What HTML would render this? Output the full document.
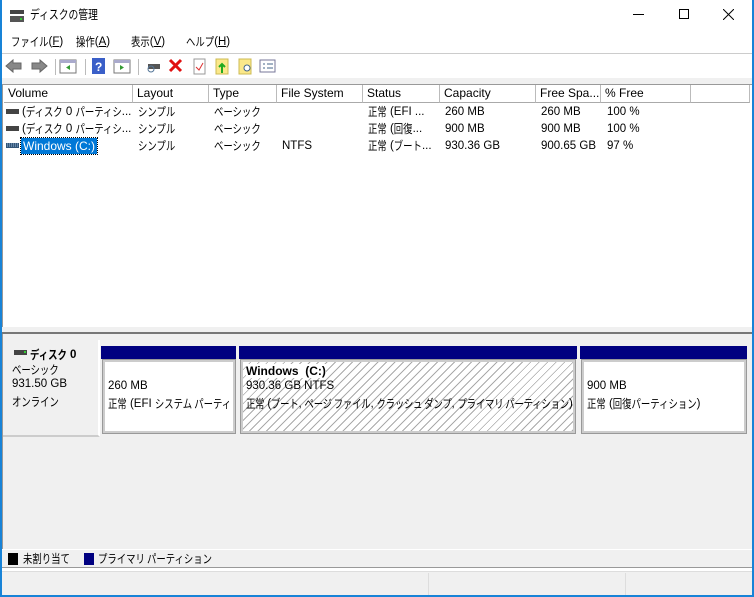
<!DOCTYPE html>
<html><head><meta charset="utf-8"><style>
*{margin:0;padding:0;box-sizing:border-box}
body{width:754px;height:597px;position:relative;overflow:hidden;background:#fff;font-family:"Liberation Sans","Noto Sans CJK JP",sans-serif;font-size:11.5px;color:#000}
.a{position:absolute;white-space:nowrap}
.k{display:inline-block;font-size:9.4px;transform:scaleY(1.27);font-family:"Noto Sans CJK JP",sans-serif;line-height:12px}
.hd{position:absolute;top:85px;height:18px;background:#fff;border-right:1px solid #bbb;border-bottom:1px solid #aaa;padding-left:4px;line-height:17px;font-size:12px}
.r{position:absolute;line-height:14px;white-space:nowrap;overflow:hidden}
.bar{position:absolute;top:346px;height:13px;background:#000080}
.box{position:absolute;top:360px;height:73px;background:#fff;border:2px solid #ccc;outline:1px solid #999}
</style></head><body>
<div class="a" style="left:0;top:0;width:2px;height:597px;background:#1883d7"></div>
<div class="a" style="right:0;top:0;width:2px;height:597px;background:#1883d7"></div>
<div class="a" style="left:0;bottom:0;width:754px;height:2px;background:#1883d7"></div>
<svg class="a" style="left:9px;top:9px" width="16" height="14"><rect x="1" y="1" width="14" height="4" fill="#444"/><rect x="1" y="7" width="14" height="6" fill="#555"/><rect x="11" y="9" width="2" height="2" fill="#3c3"/></svg>
<div class="a" style="left:30px;top:8px"><span class="k" style="font-size:9.8px">ディスクの管理</span></div>
<div class="a" style="left:633px;top:14px;width:11px;height:1px;background:#000"></div>
<div class="a" style="left:679px;top:9px;width:10px;height:10px;border:1px solid #000"></div>
<svg class="a" style="left:723px;top:9px" width="11" height="11"><path d="M0 0L11 11M11 0L0 11" stroke="#000"/></svg>
<div class="a" style="left:11px;top:35px"><span class="k">ファイル</span>(<u>F</u>)</div>
<div class="a" style="left:76px;top:35px"><span class="k">操作</span>(<u>A</u>)</div>
<div class="a" style="left:131px;top:35px"><span class="k">表示</span>(<u>V</u>)</div>
<div class="a" style="left:186px;top:35px"><span class="k">ヘルプ</span>(<u>H</u>)</div>
<div class="a" style="left:2px;top:53px;width:750px;height:1px;background:#ccc"></div>
<svg class="a" style="left:4px;top:57px" width="290" height="20">
<path d="M2 9L9 3V6H17V12H9V15Z" fill="#888" stroke="#666"/>
<path d="M43 9L36 3V6H28V12H36V15Z" fill="#888" stroke="#666"/>
<rect x="51" y="2" width="1" height="16" fill="#bbb"/>
<rect x="56" y="3" width="16" height="13" fill="#fff" stroke="#777"/><rect x="56" y="3" width="16" height="3" fill="#aac"/><path d="M66 8L62 10.5L66 13Z" fill="#393"/>
<rect x="81" y="2" width="1" height="16" fill="#bbb"/>
<rect x="88" y="1" width="13" height="16" fill="#3a5fc8"/><text x="91" y="14" fill="#fff" font-size="12" font-weight="bold" font-family="Liberation Sans">?</text>
<rect x="110" y="3" width="16" height="13" fill="#fff" stroke="#777"/><rect x="110" y="3" width="16" height="3" fill="#aac"/><path d="M116 8L120 10.5L116 13Z" fill="#393"/>
<rect x="134" y="2" width="1" height="16" fill="#bbb"/>
<rect x="144" y="7" width="12" height="5" fill="#555"/><circle cx="147" cy="12" r="3" fill="none" stroke="#579"/>
<path d="M166 3L177 14M177 3L166 14" stroke="#e01010" stroke-width="3"/>
<rect x="190" y="2" width="11" height="15" fill="#fff" stroke="#999"/><path d="M192 10L195 13L199 6" stroke="#d33" fill="none"/>
<rect x="212" y="2" width="12" height="15" fill="#fbe88a" stroke="#cb5"/><path d="M218 7V16M215 10L218 7L221 10" stroke="#2a2" stroke-width="2" fill="none"/>
<rect x="235" y="2" width="12" height="15" fill="#fbe88a" stroke="#cb5"/><circle cx="243" cy="11" r="3" fill="#fff" stroke="#468"/>
<rect x="256" y="3" width="15" height="12" fill="#fff" stroke="#779"/><path d="M259 7h2M263 7h6M259 11h2M263 11h6" stroke="#468"/>
</svg>
<div class="a" style="left:2px;top:78px;width:750px;height:6px;background:#f0f0f0"></div>
<div class="a" style="left:2px;top:84px;width:750px;height:243px;background:#fff;border-left:1px solid #999;border-top:1px solid #999"></div>
<div class="hd" style="left:4px;width:129px">Volume</div>
<div class="hd" style="left:133px;width:76px">Layout</div>
<div class="hd" style="left:209px;width:68px">Type</div>
<div class="hd" style="left:277px;width:86px">File System</div>
<div class="hd" style="left:363px;width:77px">Status</div>
<div class="hd" style="left:440px;width:96px">Capacity</div>
<div class="hd" style="left:536px;width:65px">Free Spa...</div>
<div class="hd" style="left:601px;width:90px">% Free</div>
<div class="hd" style="left:691px;width:59px"></div>
<svg class="a" style="left:6px;top:108px" width="14" height="45"><rect x="0" y="1" width="13" height="5" fill="#444"/><rect x="0" y="18" width="13" height="5" fill="#444"/><rect x="0" y="35" width="13" height="5" fill="#357"/><path d="M1 36h11M1 38h11" stroke="#9bd" stroke-dasharray="1 1"/></svg>
<div class="r" style="left:22px;top:105px;width:110px">(<span class="k">ディスク</span> 0 <span class="k">パーティシ</span>...</div>
<div class="r" style="left:22px;top:122px;width:110px">(<span class="k">ディスク</span> 0 <span class="k">パーティシ</span>...</div>
<div class="a" style="left:21px;top:138px;height:16px;padding:0 2px;background:#0078d7;color:#fff;outline:1px dotted #000;line-height:16px;font-size:12px">Windows (C:)</div>
<div class="r" style="left:138px;top:105px"><span class="k">シンプル</span></div><div class="r" style="left:138px;top:122px"><span class="k">シンプル</span></div><div class="r" style="left:138px;top:139px"><span class="k">シンプル</span></div>
<div class="r" style="left:214px;top:105px"><span class="k">ベーシック</span></div><div class="r" style="left:214px;top:122px"><span class="k">ベーシック</span></div><div class="r" style="left:214px;top:139px"><span class="k">ベーシック</span></div>
<div class="r" style="left:282px;top:139px">NTFS</div>
<div class="r" style="left:368px;top:105px"><span class="k">正常</span> (EFI ...</div><div class="r" style="left:368px;top:122px"><span class="k">正常</span> (<span class="k">回復</span>...</div><div class="r" style="left:368px;top:139px;width:70px"><span class="k">正常</span> (<span class="k">ブート</span>...</div>
<div class="r" style="left:445px;top:105px">260 MB</div><div class="r" style="left:445px;top:122px">900 MB</div><div class="r" style="left:445px;top:139px">930.36 GB</div>
<div class="r" style="left:541px;top:105px">260 MB</div><div class="r" style="left:541px;top:122px">900 MB</div><div class="r" style="left:541px;top:139px">900.65 GB</div>
<div class="r" style="left:607px;top:105px">100 %</div><div class="r" style="left:607px;top:122px">100 %</div><div class="r" style="left:607px;top:139px">97 %</div>
<div class="a" style="left:2px;top:327px;width:750px;height:6px;background:#f0f0f0"></div>
<div class="a" style="left:2px;top:332px;width:750px;height:2px;background:#777"></div>
<div class="a" style="left:2px;top:334px;width:750px;height:215px;background:#f0f0f0;border-left:1px solid #999"></div>
<div class="a" style="left:3px;top:340px;width:97px;height:97px;background:#f0f0f0;border-right:2px solid #fff;border-bottom:2px solid #ccc"></div>
<svg class="a" style="left:14px;top:350px" width="14" height="6"><rect width="13" height="5" fill="#444"/><rect x="10" y="1" width="2" height="2" fill="#3c3"/></svg>
<div class="a" style="left:30px;top:348px;font-weight:bold"><span class="k" style="font-weight:bold">ディスク</span> 0</div>
<div class="a" style="left:12px;top:363px"><span class="k">ベーシック</span></div>
<div class="a" style="left:12px;top:378px">931.50 GB</div>
<div class="a" style="left:12px;top:395px"><span class="k">オンライン</span></div>
<div class="bar" style="left:101px;width:135px"></div>
<div class="bar" style="left:239px;width:338px"></div>
<div class="bar" style="left:580px;width:167px"></div>
<div class="box" style="left:103px;width:132px"></div>
<div class="box" style="left:241px;width:334px;background:repeating-linear-gradient(135deg,#fff 0 5px,#aaa 5px 6px)"></div>
<div class="box" style="left:582px;width:164px"></div>
<div class="a" style="left:108px;top:380px">260 MB</div>
<div class="a" style="left:108px;top:397px;width:125px;overflow:hidden"><span class="k">正常</span> (EFI <span class="k">システム パーティ</span></div>
<div class="a" style="left:246px;top:364px;font-weight:bold;background:#fff;font-size:12px">Windows&nbsp; (C:)</div>
<div class="a" style="left:246px;top:380px">930.36 GB NTFS</div>
<div class="a" style="left:246px;top:397px;letter-spacing:-0.2px"><span class="k">正常</span> (<span class="k">ブート</span>, <span class="k">ページ ファイル</span>, <span class="k">クラッシュ ダンプ</span>, <span class="k">プライマリ パーティション</span>)</div>
<div class="a" style="left:587px;top:380px">900 MB</div>
<div class="a" style="left:587px;top:397px"><span class="k">正常</span> (<span class="k">回復パーティション</span>)</div>
<div class="a" style="left:2px;top:549px;width:750px;height:19px;background:#f0f0f0;border-top:1px solid #fff;border-bottom:1px solid #999"></div>
<div class="a" style="left:8px;top:553px;width:10px;height:12px;background:#000"></div>
<div class="a" style="left:23px;top:552px"><span class="k">未割り当て</span></div>
<div class="a" style="left:84px;top:553px;width:10px;height:12px;background:#000080"></div>
<div class="a" style="left:98px;top:552px"><span class="k">プライマリ パーティション</span></div>
<div class="a" style="left:2px;top:571px;width:750px;height:24px;background:#f0f0f0;border-top:1px solid #ddd"></div>
<div class="a" style="left:428px;top:573px;width:1px;height:22px;background:#ddd"></div>
<div class="a" style="left:625px;top:573px;width:1px;height:22px;background:#ddd"></div>
</body></html>
